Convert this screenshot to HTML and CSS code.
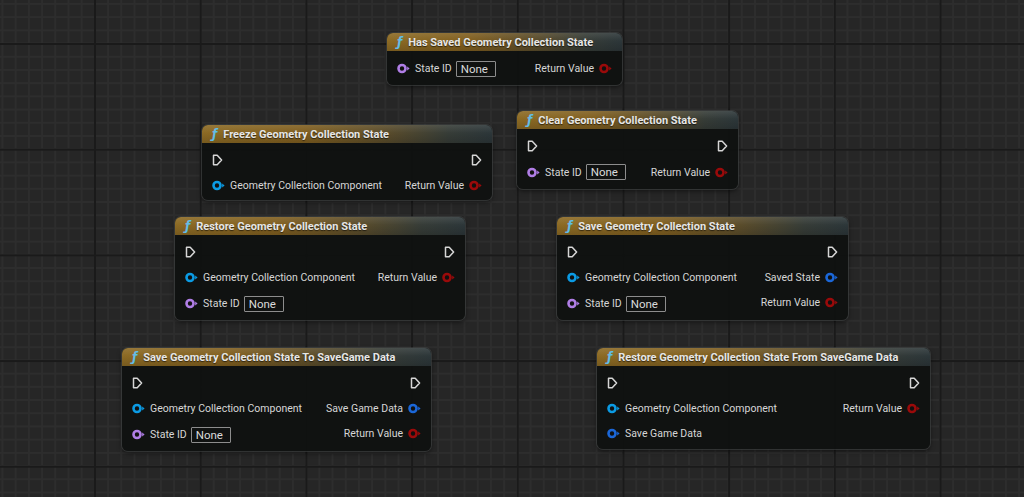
FILE: index.html
```html
<!DOCTYPE html>
<html>
<head>
<meta charset="utf-8">
<link rel="stylesheet" href="styles.css">
</head>
<body>
<svg width="0" height="0" class="defs">
  <defs>
    <symbol id="exec" viewBox="0 0 11 12"><path d="M1.5 1.2 H5.2 L9.6 6 L5.2 10.8 H1.5 Z" fill="none" stroke="#d6d6d6" stroke-width="1.5" stroke-linejoin="round"/></symbol>
    <symbol id="pin" viewBox="0 0 13 11"><circle cx="5" cy="5.5" r="3.5" fill="#101010" stroke="currentColor" stroke-width="2.6"/><path d="M10.2 3.4 L12.6 5.5 L10.2 7.6 Z" fill="currentColor"/></symbol>
  </defs>
</svg>
<div class="graph">

  <div class="node n-has">
    <div class="head"><span class="fn">ƒ</span>Has Saved Geometry Collection State</div>
    <div class="body">
      <div class="col">
        <div class="row tall"><svg class="pin name"><use href="#pin"/></svg><span>State ID</span><span class="box">None</span></div>
      </div>
      <div class="col out">
        <div class="row tall"><span>Return Value</span><svg class="pin bool"><use href="#pin"/></svg></div>
      </div>
    </div>
  </div>

  <div class="node n-freeze">
    <div class="head"><span class="fn">ƒ</span>Freeze Geometry Collection State</div>
    <div class="body">
      <div class="col">
        <div class="row"><svg class="exec"><use href="#exec"/></svg></div>
        <div class="row"><svg class="pin obj"><use href="#pin"/></svg><span>Geometry Collection Component</span></div>
      </div>
      <div class="col out">
        <div class="row"><svg class="exec"><use href="#exec"/></svg></div>
        <div class="row"><span>Return Value</span><svg class="pin bool"><use href="#pin"/></svg></div>
      </div>
    </div>
  </div>

  <div class="node n-clear">
    <div class="head"><span class="fn">ƒ</span>Clear Geometry Collection State</div>
    <div class="body">
      <div class="col">
        <div class="row"><svg class="exec"><use href="#exec"/></svg></div>
        <div class="row tall"><svg class="pin name"><use href="#pin"/></svg><span>State ID</span><span class="box">None</span></div>
      </div>
      <div class="col out">
        <div class="row"><svg class="exec"><use href="#exec"/></svg></div>
        <div class="row tall"><span>Return Value</span><svg class="pin bool"><use href="#pin"/></svg></div>
      </div>
    </div>
  </div>

  <div class="node n-restore">
    <div class="head"><span class="fn">ƒ</span>Restore Geometry Collection State</div>
    <div class="body">
      <div class="col">
        <div class="row"><svg class="exec"><use href="#exec"/></svg></div>
        <div class="row"><svg class="pin obj"><use href="#pin"/></svg><span>Geometry Collection Component</span></div>
        <div class="row tall"><svg class="pin name"><use href="#pin"/></svg><span>State ID</span><span class="box">None</span></div>
      </div>
      <div class="col out">
        <div class="row"><svg class="exec"><use href="#exec"/></svg></div>
        <div class="row"><span>Return Value</span><svg class="pin bool"><use href="#pin"/></svg></div>
      </div>
    </div>
  </div>

  <div class="node n-save">
    <div class="head"><span class="fn">ƒ</span>Save Geometry Collection State</div>
    <div class="body">
      <div class="col">
        <div class="row"><svg class="exec"><use href="#exec"/></svg></div>
        <div class="row"><svg class="pin obj"><use href="#pin"/></svg><span>Geometry Collection Component</span></div>
        <div class="row tall"><svg class="pin name"><use href="#pin"/></svg><span>State ID</span><span class="box">None</span></div>
      </div>
      <div class="col out">
        <div class="row"><svg class="exec"><use href="#exec"/></svg></div>
        <div class="row"><span>Saved State</span><svg class="pin obj2"><use href="#pin"/></svg></div>
        <div class="row"><span>Return Value</span><svg class="pin bool"><use href="#pin"/></svg></div>
      </div>
    </div>
  </div>

  <div class="node n-savegame">
    <div class="head"><span class="fn">ƒ</span>Save Geometry Collection State To SaveGame Data</div>
    <div class="body">
      <div class="col">
        <div class="row"><svg class="exec"><use href="#exec"/></svg></div>
        <div class="row"><svg class="pin obj"><use href="#pin"/></svg><span>Geometry Collection Component</span></div>
        <div class="row tall"><svg class="pin name"><use href="#pin"/></svg><span>State ID</span><span class="box">None</span></div>
      </div>
      <div class="col out">
        <div class="row"><svg class="exec"><use href="#exec"/></svg></div>
        <div class="row"><span>Save Game Data</span><svg class="pin obj2"><use href="#pin"/></svg></div>
        <div class="row"><span>Return Value</span><svg class="pin bool"><use href="#pin"/></svg></div>
      </div>
    </div>
  </div>

  <div class="node n-restoregame">
    <div class="head"><span class="fn">ƒ</span>Restore Geometry Collection State From SaveGame Data</div>
    <div class="body">
      <div class="col">
        <div class="row"><svg class="exec"><use href="#exec"/></svg></div>
        <div class="row"><svg class="pin obj"><use href="#pin"/></svg><span>Geometry Collection Component</span></div>
        <div class="row"><svg class="pin obj2"><use href="#pin"/></svg><span>Save Game Data</span></div>
      </div>
      <div class="col out">
        <div class="row"><svg class="exec"><use href="#exec"/></svg></div>
        <div class="row"><span>Return Value</span><svg class="pin bool"><use href="#pin"/></svg></div>
      </div>
    </div>
  </div>

</div>
</body>
</html>
```

FILE: styles.css
```css
html, body {
  margin: 0;
  padding: 0;
  width: 1024px;
  height: 497px;
  overflow: hidden;
}

body {
  font-family: Roboto, "Noto Sans", "Liberation Sans", sans-serif;
  background-color: #262626;
  background-image:
    linear-gradient(to right, #1a1a1a 2px, transparent 2px),
    linear-gradient(to bottom, #1a1a1a 2px, transparent 2px),
    linear-gradient(to right, #2d2d2d 2px, transparent 2px),
    linear-gradient(to bottom, #2d2d2d 2px, transparent 2px);
  background-size:
    105.7px 105.7px,
    105.7px 105.7px,
    13.2125px 13.2125px,
    13.2125px 13.2125px;
  background-position:
    94px 43px,
    94px 43px,
    1.5px 3px,
    1.5px 3px;
}

.defs {
  position: absolute;
}

.graph {
  position: relative;
  width: 1024px;
  height: 497px;
}

.node {
  position: absolute;
  box-sizing: border-box;
  background: rgba(15, 17, 16, 0.94);
  border-radius: 6px;
  box-shadow: 0 0 0 1px rgba(70, 72, 72, 0.55), 0 2px 5px rgba(0, 0, 0, 0.55);
  overflow: hidden;
}

.head {
  height: 18px;
  display: flex;
  align-items: center;
  padding-left: 10px;
  font-size: 11px;
  font-weight: 700;
  color: #e6e6e6;
  text-shadow: 0 1px 1px rgba(0, 0, 0, 0.6);
  white-space: nowrap;
  background:
    linear-gradient(to bottom, rgba(255, 255, 255, 0.10), rgba(255, 255, 255, 0) 45%, rgba(0, 0, 0, 0.15)),
    linear-gradient(to right, #8c6a24 0%, #805f20 35%, #5c4d2a 62%, #363c37 85%, #2c3639 100%);
}

.fn {
  font-family: "DejaVu Sans", sans-serif;
  font-style: italic;
  font-weight: 700;
  color: #62bde6;
  font-size: 12px;
  margin-right: 6px;
  text-shadow: none;
}

.body {
  display: flex;
  justify-content: space-between;
  padding: 4px 10px 2px 10px;
}

.col {
  display: flex;
  flex-direction: column;
}

.col.out {
  align-items: flex-end;
}

.row {
  height: 25.5px;
  display: flex;
  align-items: center;
  gap: 5px;
  font-size: 10.5px;
  color: #d6d6d6;
  white-space: nowrap;
}

.row.tall {
  height: 27px;
  margin-bottom: 1px;
}

.exec {
  width: 11px;
  height: 12px;
}

.pin {
  width: 13px;
  height: 11px;
}

.pin.obj { color: #0b9be4; }
.pin.obj2 { color: #1b67d8; }
.pin.name { color: #b07ee6; }
.pin.bool { color: #9a0a0a; }

.box {
  box-sizing: border-box;
  width: 40px;
  height: 16px;
  border: 1px solid #8d8d8d;
  border-radius: 1px;
  padding: 0 4px;
  margin-left: -1px;
  line-height: 14px;
  color: #dadada;
  font-size: 11.5px;
}

.n-has { left: 387px; top: 33px; width: 235px; }
.n-freeze { left: 202px; top: 125px; width: 290px; }
.n-clear { left: 517px; top: 111px; width: 221px; }
.n-restore { left: 175px; top: 217px; width: 290px; }
.n-save { left: 557px; top: 217px; width: 291px; }
.n-savegame { left: 122px; top: 348px; width: 309px; }
.n-restoregame { left: 597px; top: 348px; width: 333px; }
```
